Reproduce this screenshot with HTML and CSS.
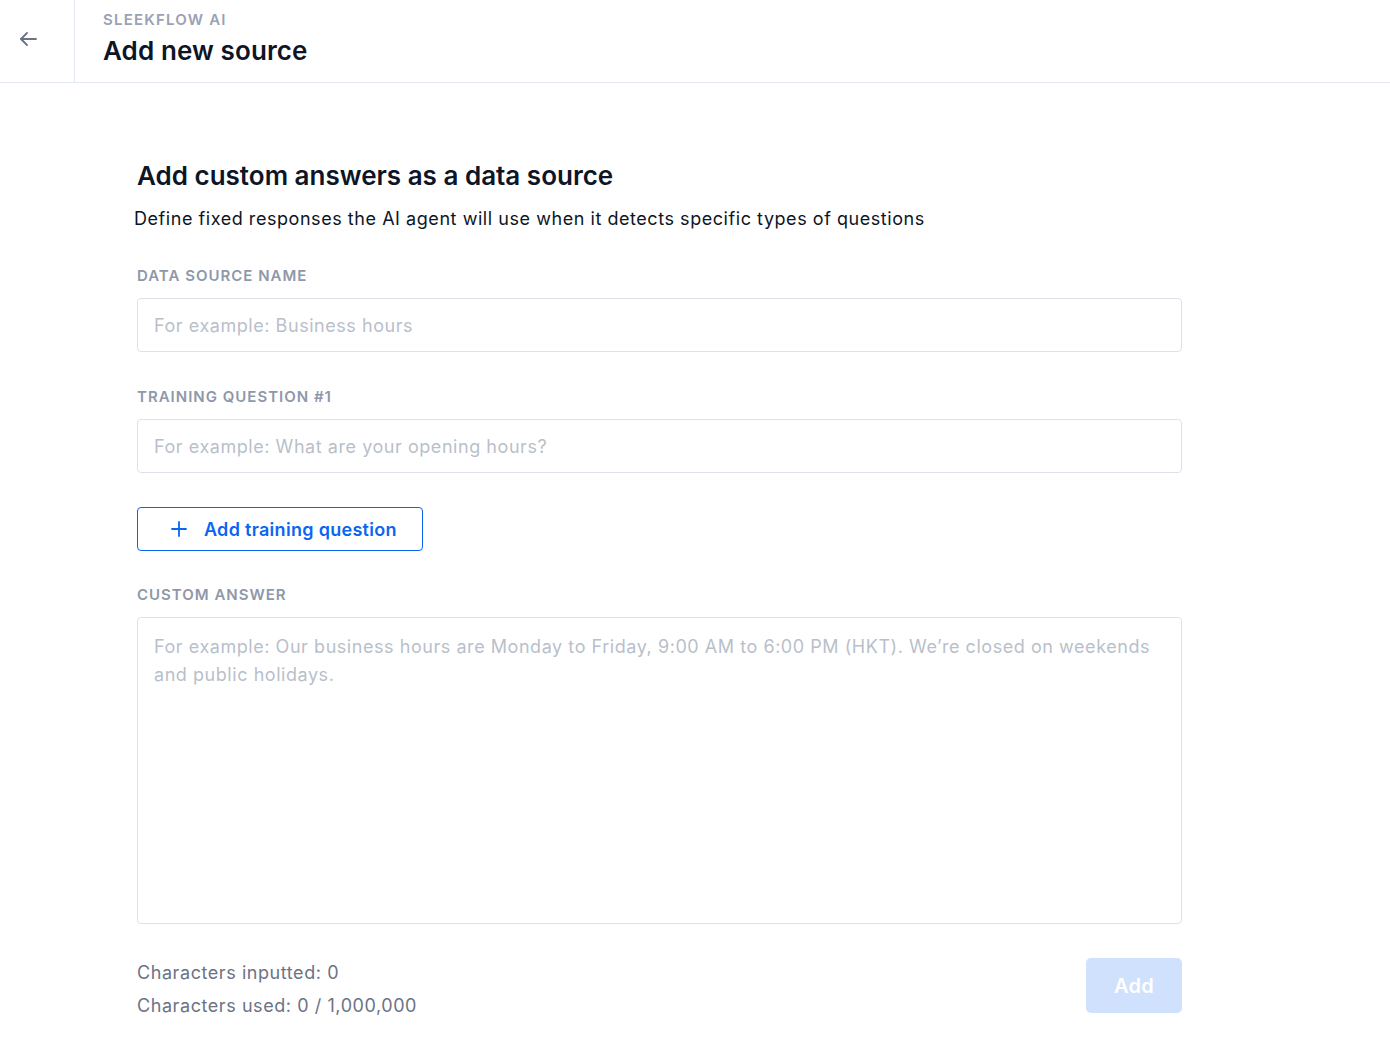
FILE: index.html
```html
<!DOCTYPE html>
<html>
<head>
<meta charset="utf-8">
<link rel="stylesheet" href="styles.css">
</head>
<body>
<header class="topbar">
  <div class="back">
    <svg width="24" height="24" viewBox="0 0 24 24" fill="none" stroke="#6b7385" stroke-width="1.8" stroke-linecap="round" stroke-linejoin="round"><path d="M20 12H5"/><path d="M11 6l-6 6 6 6"/></svg>
  </div>
  <div class="titles">
    <div class="eyebrow">SLEEKFLOW AI</div>
    <h1 class="page-title">Add new source</h1>
  </div>
</header>
<main class="content">
  <h2 class="section-title">Add custom answers as a data source</h2>
  <p class="section-desc">Define fixed responses the AI agent will use when it detects specific types of questions</p>

  <div class="field first">
    <label class="label">DATA SOURCE NAME</label>
    <div class="input">For example: Business hours</div>
  </div>

  <div class="field">
    <label class="label">TRAINING QUESTION #1</label>
    <div class="input">For example: What are your opening hours?</div>
  </div>

  <button class="add-question">
    <svg width="18" height="18" viewBox="0 0 18 18" fill="none" stroke="#0a66f0" stroke-width="1.8" stroke-linecap="round"><path d="M9 2v14M2 9h14"/></svg>
    <span>Add training question</span>
  </button>

  <div class="field after-btn">
    <label class="label">CUSTOM ANSWER</label>
    <div class="textarea">For example: Our business hours are Monday to Friday, 9:00 AM to 6:00 PM (HKT). We’re closed on weekends and public holidays.</div>
  </div>

  <div class="footer">
    <div class="counts">
      <div>Characters inputted: 0</div>
      <div>Characters used: 0 / 1,000,000</div>
    </div>
    <button class="add-btn">Add</button>
  </div>
</main>
</body>
</html>
```
FILE: styles.css
```css
* { box-sizing: border-box; }
body {
  margin: 0;
  font-family: Inter, "Noto Sans", sans-serif;
  color: #0d1526;
  background: #fff;
}
.topbar {
  display: flex;
  height: 83px;
  border-bottom: 1px solid #e3e8f0;
}
.back {
  width: 75px;
  border-right: 1px solid #e3e8f0;
  display: flex;
  justify-content: center;
  padding-top: 27px;
  padding-right: 18px;
}
.titles {
  padding-left: 28px;
  padding-top: 11px;
}
.eyebrow {
  font-size: 15px;
  font-weight: 600;
  letter-spacing: 1.2px;
  color: #9aa2b3;
  line-height: 18px;
}
.page-title {
  margin: 0;
  margin-top: 5px;
  font-size: 26px;
  font-weight: 600;
  line-height: 34px;
  color: #0d1526;
  letter-spacing: 0.1px;
}
.content {
  padding: 76px 0 0 137px;
  width: 1182px;
}
.section-title {
  margin: 0;
  font-size: 26px;
  font-weight: 600;
  line-height: 34px;
  letter-spacing: 0;
}
.section-desc {
  margin: 13px 0 0 -3px;
  font-size: 18px;
  line-height: 26px;
  letter-spacing: 0.55px;
  color: #0d1526;
}
.field {
  margin-top: 35px;
}
.field.first { margin-top: 34px; }
.field.after-btn { margin-top: 34px; }
.label {
  display: block;
  font-size: 15px;
  font-weight: 600;
  letter-spacing: 1px;
  color: #8e98aa;
  line-height: 20px;
  margin-bottom: 12px;
}
.input {
  height: 54px;
  border: 1px solid #dde2ea;
  border-radius: 4px;
  padding: 0 16px;
  display: flex;
  align-items: center;
  font-size: 18px;
  letter-spacing: 0.55px;
  color: #b9bfca;
}
.textarea {
  height: 307px;
  border: 1px solid #dde2ea;
  border-radius: 4px;
  padding: 15px 16px;
  font-size: 18px;
  line-height: 28px;
  letter-spacing: 0.55px;
  color: #b9bfca;
}
.add-question {
  margin-top: 34px;
  width: 286px;
  height: 44px;
  border: 1.5px solid #0a66f0;
  border-radius: 4px;
  background: #fff;
  display: flex;
  align-items: center;
  gap: 16px;
  padding: 0 0 0 32px;
  font-family: inherit;
  font-size: 18px;
  font-weight: 600;
  letter-spacing: 0.3px;
  color: #0a66f0;
  cursor: pointer;
}
.footer {
  display: flex;
  justify-content: space-between;
  align-items: flex-end;
  margin-top: 32px;
}
.counts {
  font-size: 18px;
  line-height: 33px;
  letter-spacing: 0.57px;
  color: #6b7385;
}
.add-btn {
  width: 96px;
  height: 55px;
  border: none;
  border-radius: 5px;
  background: #cfe1fd;
  color: #fff;
  font-family: inherit;
  font-size: 20px;
  font-weight: 600;
  letter-spacing: 0.3px;
  margin-bottom: 9px;
}
```
